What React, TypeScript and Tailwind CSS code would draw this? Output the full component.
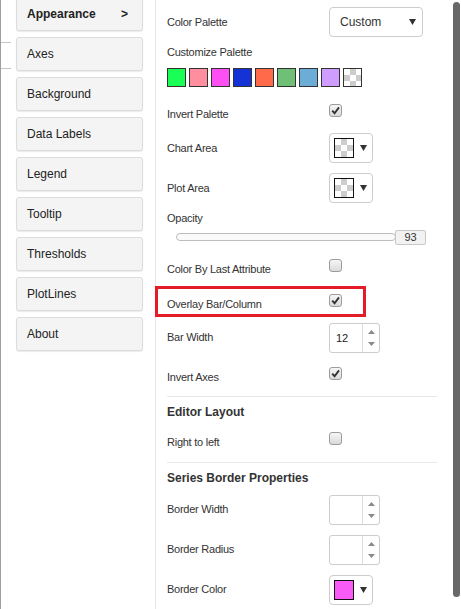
import type { ReactNode } from 'react';

const menu = ['Appearance', 'Axes', 'Background', 'Data Labels', 'Legend', 'Tooltip', 'Thresholds', 'PlotLines', 'About'];
const palette = ['#1aff55', '#ff8f9f', '#fd50f2', '#1432d6', '#ff6a4a', '#6fc076', '#6badd6', '#cf9dff'];

const checker = 'bg-white bg-[conic-gradient(#cccccc_25%,#ffffff_0_50%,#cccccc_0_75%,#ffffff_0)] bg-[length:12px_12px]';

function Checkbox({ checked }: { checked?: boolean }) {
  return (
    <span className="w-[13px] h-[13px] mb-[3px] rounded-[3px] border border-[#9c9c9c] bg-linear-to-b from-[#f6f6f6] to-[#dadada] flex items-center justify-center">
      {checked && (
        <svg width="9" height="9" viewBox="0 0 9 9">
          <path d="M1.2 4.6 L3.6 7.2 L8 1.4" stroke="#333" strokeWidth="1.9" fill="none" />
        </svg>
      )}
    </span>
  );
}

function Caret() {
  return (
    <svg width="7" height="6" viewBox="0 0 7 6">
      <path d="M0 0 H7 L3.5 6 Z" fill="#333" />
    </svg>
  );
}

function ColorButton({ swatch }: { swatch: string }) {
  return (
    <div className="w-[44px] h-[30px] border border-[#cccccc] rounded-[4px] bg-white flex items-center pl-[4px] gap-[6px]">
      <span className={`w-[20px] h-[20px] border border-[#111] ${swatch}`} />
      <Caret />
    </div>
  );
}

function Spinner({ value }: { value?: string }) {
  return (
    <div className="flex w-[51px] h-[30px] border border-[#cccccc] rounded-[3px] bg-white">
      <div className="flex-1 flex items-center pl-[6px] text-[11px] text-[#222]">{value}</div>
      <div className="w-[17px] border-l border-[#dddddd] flex flex-col items-center justify-center gap-[8px]">
        <svg width="7" height="4" viewBox="0 0 7 4"><path d="M0 4 L3.5 0 L7 4 Z" fill="#8a8a8a" /></svg>
        <svg width="7" height="4" viewBox="0 0 7 4"><path d="M0 0 H7 L3.5 4 Z" fill="#8a8a8a" /></svg>
      </div>
    </div>
  );
}

function Row({ label, className, children, labelClass = 'mt-[3px]' }: { label: string; className: string; children?: ReactNode; labelClass?: string }) {
  return (
    <div className={`relative flex h-[30px] items-center ${className}`}>
      <div className={`w-[162px] text-[11px] leading-[14px] tracking-[-0.25px] text-[#333] ${labelClass}`}>{label}</div>
      {children}
    </div>
  );
}

export default function App() {
  return (
    <div className="flex h-[609px] w-[461px] overflow-hidden bg-white border-l border-[#9e9e9e] font-['Liberation_Sans',Arial,sans-serif]">
      <div className="relative w-[154px] shrink-0 pl-[15px] pr-[12px] -mt-[3px] flex flex-col gap-[6px]">
        <span className="absolute left-0 top-[45px] w-[10px] h-px bg-[#c4c4c4]" />
        <span className="absolute left-0 top-[71px] w-[10px] h-px bg-[#c4c4c4]" />
        {menu.map((m, i) => (
          <div
            key={m}
            className="h-[34px] shrink-0 rounded-[3px] border border-[#dcdcdc] bg-[#f4f4f4] shadow-[0_1px_1px_rgba(0,0,0,0.08)] flex items-center justify-between pl-[10px] pr-[14px] text-[12px] text-[#222]"
          >
            <span className={i === 0 ? 'font-bold' : ''}>{m}</span>
            {i === 0 && <span className="font-bold">&gt;</span>}
          </div>
        ))}
      </div>

      <div className="flex-1 border-l border-[#e6e6e6] pl-[11px] pr-[16px] flex flex-col">
        <Row label="Color Palette" className="mt-[7px]" labelClass="">
          <div className="w-[94px] h-[30px] border border-[#cccccc] rounded-[4px] flex items-center justify-between pl-[10px] pr-[6px] text-[12px] text-[#333]">
            <span>Custom</span>
            <Caret />
          </div>
        </Row>

        <div className="mt-[8px] h-[14px] text-[11px] leading-[14px] tracking-[-0.25px] text-[#333]">Customize Palette</div>
        <div className="mt-[9px] flex gap-[3px]">
          {palette.map(c => (
            <span key={c} className="w-[19px] h-[19px] border border-[#333]" style={{ backgroundColor: c }} />
          ))}
          <span className={`w-[19px] h-[19px] border border-[#333] ${checker}`} />
        </div>

        <Row label="Invert Palette" className="mt-[10px]">
          <Checkbox checked />
        </Row>
        <Row label="Chart Area" className="mt-[6px]" labelClass="">
          <ColorButton swatch={checker} />
        </Row>
        <Row label="Plot Area" className="mt-[10px]" labelClass="">
          <ColorButton swatch={checker} />
        </Row>

        <div className="mt-[8px] h-[14px] text-[11px] leading-[14px] tracking-[-0.25px] text-[#333]">Opacity</div>
        <div className="mt-[5px] h-[14px] flex items-center pl-[9px]">
          <div className="w-[220px] h-[8px] rounded-full border border-[#bdbdbd] bg-[#fafafa]" />
          <div className="w-[31px] h-[15px] -ml-px rounded-[2px] border border-[#c8c8c8] bg-[#f2f2f2] flex items-center justify-center text-[11px] text-[#333]">
            93
          </div>
        </div>

        <Row label="Color By Last Attribute" className="mt-[8px]">
          <Checkbox />
        </Row>
        <Row label="Overlay Bar/Column" className="mt-[5px]">
          <Checkbox checked />
          <span className="absolute -left-[12px] -top-px w-[211px] h-[31px] border-[3px] border-[#e31c25]" />
        </Row>
        <Row label="Bar Width" className="mt-[6px]" labelClass="-mt-[3px]">
          <Spinner value="12" />
        </Row>
        <Row label="Invert Axes" className="mt-[7px]">
          <Checkbox checked />
        </Row>

        <div className="mt-[6px] h-px bg-[#e8e8e8]" />
        <div className="mt-[8px] h-[15px] text-[12px] leading-[15px] font-bold text-[#333]">Editor Layout</div>
        <Row label="Right to left" className="mt-[5px]" labelClass="mt-[4px]">
          <Checkbox />
        </Row>

        <div className="mt-[7px] h-px bg-[#e8e8e8]" />
        <div className="mt-[8px] h-[15px] text-[12px] leading-[15px] font-bold text-[#333]">Series Border Properties</div>
        <Row label="Border Width" className="mt-[9px]" labelClass="-mt-[3px]">
          <Spinner />
        </Row>
        <Row label="Border Radius" className="mt-[10px]" labelClass="-mt-[3px]">
          <Spinner />
        </Row>
        <Row label="Border Color" className="mt-[10px]" labelClass="-mt-[3px]">
          <ColorButton swatch="bg-[#f95cf6]" />
        </Row>
      </div>

      <div className="w-[8px] shrink-0 pt-[2px]">
        <div className="w-[7px] h-[595px] rounded-full bg-[#686868]" />
      </div>
    </div>
  );
}
